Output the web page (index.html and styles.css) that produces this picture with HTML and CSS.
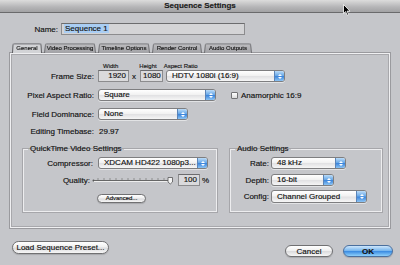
FILE: index.html
```html
<!DOCTYPE html>
<html lang="en">
<head>
  <meta charset="UTF-8">
  <title>Sequence Settings</title>
  <link rel="stylesheet" href="styles.css">
</head>
<body>
  <div class="titlebar">
    Sequence Settings
    <svg class="cursor" width="8" height="12" viewBox="0 0 8 12"><path d="M0.5 0.5 L0.5 9.5 L2.6 7.6 L4.2 11.2 L5.6 10.6 L4.1 7.1 L7 7.1 Z" fill="#000" stroke="#fff" stroke-width="0.8"/></svg>
  </div>

  <div class="name-row">
    <label>Name:</label>
    <div class="field name-field"><span class="selected">Sequence 1</span></div>
  </div>

  <div class="tabs">
    <div class="tab active">General</div>
    <div class="tab">Video Processing</div>
    <div class="tab">Timeline Options</div>
    <div class="tab">Render Control</div>
    <div class="tab">Audio Outputs</div>
  </div>

  <div class="panel">
    <div class="size-head">
      <span class="h-width">Width</span>
      <span class="h-height">Height</span>
      <span class="h-aspect">Aspect Ratio</span>
    </div>
    <div class="row first">
      <label>Frame Size:</label>
      <div class="field num w30">1920</div>
      <span class="times">x</span>
      <div class="field num w22">1080</div>
      <div class="popup w119"><span>HDTV 1080i (16:9)</span><i class="arrows"></i></div>
    </div>
    <div class="row">
      <label>Pixel Aspect Ratio:</label>
      <div class="popup w118"><span>Square</span><i class="arrows"></i></div>
      <span class="check"></span>
      <span class="check-label">Anamorphic 16:9</span>
    </div>
    <div class="row">
      <label>Field Dominance:</label>
      <div class="popup w90"><span>None</span><i class="arrows"></i></div>
    </div>
    <div class="row timebase">
      <label>Editing Timebase:</label>
      <span class="value">29.97</span>
    </div>

    <div class="groups">
      <fieldset class="group qt">
        <legend>QuickTime Video Settings</legend>
        <div class="row first">
          <label>Compressor:</label>
          <div class="popup w110"><span>XDCAM HD422 1080p3...</span><i class="arrows"></i></div>
        </div>
        <div class="row quality">
          <label>Quality:</label>
          <svg class="slider" width="84" height="9" viewBox="0 0 84 9">
            <circle cx="1.5" cy="4.5" r="1" fill="#555"/>
            <line x1="2" y1="4.5" x2="78" y2="4.5" stroke="#666" stroke-width="1"/>
            <line x1="2" y1="5.5" x2="78" y2="5.5" stroke="#eee" stroke-width="1"/>
            <g stroke="#777" stroke-width="0.7">
              <line x1="6" y1="2" x2="6" y2="4"/><line x1="12" y1="2" x2="12" y2="4"/><line x1="18" y1="2" x2="18" y2="4"/>
              <line x1="24" y1="2" x2="24" y2="4"/><line x1="30" y1="2" x2="30" y2="4"/><line x1="36" y1="2" x2="36" y2="4"/>
              <line x1="42" y1="2" x2="42" y2="4"/><line x1="48" y1="2" x2="48" y2="4"/><line x1="54" y1="2" x2="54" y2="4"/>
              <line x1="60" y1="2" x2="60" y2="4"/><line x1="66" y1="2" x2="66" y2="4"/><line x1="72" y1="2" x2="72" y2="4"/>
            </g>
            <path d="M76 1.5 H80.5 V6 L78.25 8 L76 6 Z" fill="#f4f4f4" stroke="#555" stroke-width="0.8"/>
          </svg>
          <div class="field num w20">100</div>
          <span class="unit">%</span>
        </div>
        <div class="adv-row">
          <button class="btn small">Advanced...</button>
        </div>
      </fieldset>

      <fieldset class="group audio">
        <legend>Audio Settings</legend>
        <div class="row first">
          <label>Rate:</label>
          <div class="popup w75"><span>48 kHz</span><i class="arrows"></i></div>
        </div>
        <div class="row">
          <label>Depth:</label>
          <div class="popup w63"><span>16-bit</span><i class="arrows"></i></div>
        </div>
        <div class="row last">
          <label>Config:</label>
          <div class="popup w96"><span>Channel Grouped</span><i class="arrows"></i></div>
        </div>
      </fieldset>
    </div>
  </div>

  <div class="footer">
    <button class="btn load">Load Sequence Preset...</button>
    <div class="actions">
      <button class="btn cancel">Cancel</button>
      <button class="btn ok">OK</button>
    </div>
  </div>
</body>
</html>
```

FILE: styles.css
```css
body {
  margin: 0;
  width: 400px;
  height: 265px;
  overflow: hidden;
  background: #c5c6ca;
  font-family: 'Liberation Sans', Arial, sans-serif;
  font-size: 8px;
  color: #111;
  -webkit-text-stroke: 0.15px #111;
}
.titlebar {
  position: relative;
  height: 12px;
  line-height: 12px;
  text-align: center;
  font-weight: bold;
  color: #1c1c1c;
  background: linear-gradient(#dcdcdc, #b4b4b6 60%, #a2a2a4);
  border-bottom: 1px solid #6a6a6c;
}
.cursor {
  position: absolute;
  left: 343px;
  top: 4px;
}
.name-row {
  display: flex;
  align-items: center;
  margin-top: 10px;
  height: 12px;
}
.name-row label {
  width: 58px;
  text-align: right;
  margin-right: 3px;
}
.field {
  height: 10px;
  line-height: 10px;
  background: #d9d9db;
  border: 1px solid #8c8c8e;
  border-top-color: #6c6c6e;
  box-sizing: content-box;
  padding: 0 2px;
}
.name-field {
  width: 178px;
  background: #d4d4d6;
}
.selected {
  background: #a9cdf3;
  padding: 0 1px;
}
.tabs {
  display: flex;
  margin: 8px 0 0 12px;
  height: 10px;
  gap: 2px;
  font-size: 6px;
}
.tab {
  position: relative;
  z-index: 0;
  box-sizing: border-box;
  height: 10px;
  line-height: 11px;
  text-align: center;
  white-space: nowrap;
  color: #222;
}
.tab::before {
  content: '';
  position: absolute;
  inset: 0;
  z-index: -1;
  background: linear-gradient(#bcbcbf, #a2a2a6);
  border: 1px solid #6e6e72;
  border-bottom: none;
  border-radius: 2px 2px 0 0;
  transform: perspective(12px) rotateX(3deg);
  transform-origin: bottom;
}
.tab.active::before {
  background: #d2d3d6;
  border-color: #5e5e62;
}
.tab:nth-child(1) { width: 30px; }
.tab:nth-child(2) { width: 52px; }
.tab:nth-child(3) { width: 52px; }
.tab:nth-child(4) { width: 50px; }
.tab:nth-child(5) { width: 48px; }
.panel {
  margin: 0 10px;
  border: 1px solid #f0f0f2;
  box-shadow: 0 0 0 1px #9a9a9e, inset 0 0 0 1px #a8a8ac;
  padding-top: 8px;
  box-sizing: content-box;
  height: 165px;
}
.size-head {
  display: flex;
  height: 8px;
  line-height: 8px;
  font-size: 6px;
  color: #222;
}
.h-width { margin-left: 92px; }
.h-height { margin-left: 21px; }
.h-aspect { margin-left: 7px; }
.row {
  display: flex;
  align-items: center;
  height: 12px;
  margin-top: 7px;
}
.row.first { margin-top: 0; }
.row label {
  width: 83px;
  padding-right: 4px;
  text-align: right;
  flex: none;
}
.num {
  text-align: right;
  background: #dadadc;
}
.w30 { width: 25px; }
.w22 { width: 17px; }
.w20 { width: 16px; }
.times {
  margin: 0 4px 0 3px;
}
.row.first .popup { margin-left: 3px; }
.row.first label + .popup { margin-left: 0; }
.popup {
  display: flex;
  align-items: stretch;
  height: 10px;
  line-height: 10px;
  border: 1px solid #7e7e80;
  border-radius: 3px;
  background: linear-gradient(#ffffff, #f2f2f2 45%, #e2e2e4 55%, #f6f6f6);
  box-shadow: 0 1px 0 rgba(255, 255, 255, 0.5);
  overflow: hidden;
  flex: none;
}
.popup span {
  flex: 1;
  padding-left: 5px;
  white-space: nowrap;
  overflow: hidden;
}
.arrows {
  width: 9px;
  display: flex;
  flex-direction: column;
  align-items: center;
  justify-content: center;
  gap: 1px;
  background: linear-gradient(#bcdcf8, #6aa9e8 45%, #3f87dc 55%, #8cc4f4);
  border-left: 1px solid #5a84b8;
}
.arrows::before,
.arrows::after {
  content: '';
  border-left: 2px solid transparent;
  border-right: 2px solid transparent;
}
.arrows::before { border-bottom: 2px solid #fff; }
.arrows::after { border-top: 2px solid #fff; }
.w119 { width: 117px; }
.w118 { width: 116px; }
.w90 { width: 88px; }
.w110 { width: 108px; }
.w75 { width: 73px; }
.w63 { width: 61px; }
.w96 { width: 94px; }
.check {
  width: 5px;
  height: 5px;
  margin-left: 15px;
  border: 1px solid #737375;
  border-radius: 1px;
  background: linear-gradient(#ffffff, #dcdcdc);
}
.check-label {
  margin-left: 3px;
}
.timebase {
  margin-top: 5px;
}
.value {
  margin-left: 1px;
}
.groups {
  display: flex;
  margin: 7px 0 0 12px;
  gap: 13px;
}
.group {
  margin: 0;
  padding: 0 0 8px;
  border: 1px solid #ededef;
  box-shadow: 0 0 0 1px #a6a6aa;
  min-width: 0;
}
.group legend {
  margin-left: 4px;
  padding: 0 2px;
  height: 10px;
  line-height: 10px;
}
.qt { width: 192px; }
.audio { width: 150px; }
.qt .row label {
  width: 69px;
  padding-right: 5px;
}
.qt .row.first { margin-top: 3px; }
.audio .row label {
  width: 38px;
  padding-right: 2px;
}
.audio .row { margin-top: 5px; }
.audio .row.first { margin-top: 3px; }
.audio .row.last { margin-top: 4px; height: 13px; }
.audio .row.last .popup { height: 11px; line-height: 11px; }
.quality {
  margin-top: 5px;
}
.qt .quality label {
  width: 66px;
  padding-right: 2px;
}
.slider {
  flex: none;
  margin-right: 2px;
}
.unit {
  margin-left: 2px;
}
.adv-row {
  margin: 8px 0 0 73px;
  height: 9px;
  display: flex;
}
.btn {
  font-family: inherit;
  color: #111;
  border: 1px solid #707072;
  border-radius: 7px;
  background: linear-gradient(#ffffff, #f0f0f0 45%, #dcdcde 55%, #f6f6f6);
  padding: 0;
  margin: 0;
  box-shadow: 0 1px 1px rgba(0, 0, 0, 0.15);
}
.btn.small {
  width: 49px;
  height: 9px;
  line-height: 7px;
  font-size: 6px;
  border-radius: 5px;
}
.footer {
  display: flex;
  justify-content: space-between;
  align-items: flex-start;
  margin: 13px 7px 0 12px;
}
.btn.load {
  width: 97px;
  height: 13px;
  font-size: 8px;
}
.actions {
  display: flex;
  gap: 10px;
  margin-top: 4px;
}
.btn.cancel {
  width: 48px;
  height: 12px;
  font-size: 8px;
}
.btn.ok {
  width: 50px;
  height: 12px;
  font-size: 8px;
  font-weight: bold;
  border-color: #4a6f9e;
  background: linear-gradient(#cfe6fb, #7ab8ef 45%, #3e8ee2 55%, #8ed0fb);
}
```
